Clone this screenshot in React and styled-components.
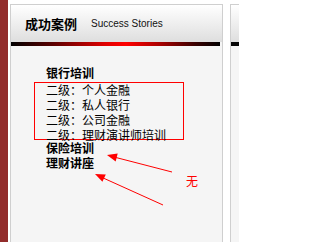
import React from 'react';
import styled, { createGlobalStyle } from 'styled-components';

const Global = createGlobalStyle`
html, body {
    margin: 0;
    padding: 0;
    background: #fff;
}
body {
    width: 239px;
    height: 242px;
    overflow: hidden;
    font-family: "Liberation Sans", "Noto Sans CJK SC", sans-serif;
}
`

const Page = styled.div`
position: relative;
display: flex;
width: 239px;
height: 242px;
`
const Strip = styled.div`
width: 8px;
flex: none;
background: #922c2b;
margin-right: 2px;
`
const Panel = styled.div`
flex: none;
width: ${p => p.width}px;
margin-top: 4px;
margin-right: ${p => p.gap || 0}px;
border: 1px solid #cfcfcf;
border-bottom: none;
display: flex;
flex-direction: column;
background: #f5f5f5;
`
const Header = styled.div`
height: 37px;
display: flex;
align-items: center;
padding-left: 14px;
background: linear-gradient(to bottom, #ffffff, #dedede);
`
const Title = styled.span`
font-size: 13px;
font-weight: 700;
color: #000;
`
const SubTitle = styled.span`
font-size: 10px;
color: #111;
margin-left: 14px;
`
const Bar = styled.div`
height: 4px;
margin-right: ${p => p.dark ? 0 : 2}px;
background: ${p => p.dark
    ? '#050505'
    : 'linear-gradient(to right, #000 0%, #5a0000 20%, #e00000 45%, #ff0000 55%, #b00000 70%, #3a0000 88%, #000 100%)'};
`
const Body = styled.div`
flex: 1;
padding: 21px 0 0 35px;
`
const Line = styled.div`
font-size: 12px;
line-height: 15px;
height: 15px;
white-space: nowrap;
color: #000;
font-weight: ${p => p.bold ? 700 : 400};
`
const Group = styled.div`
box-sizing: border-box;
width: 150px;
height: 58px;
margin: 0 0 2px -12px;
padding: 1px 0 0 11px;
border: 1px solid #f00;
`
const Note = styled.span`
position: absolute;
left: 186px;
top: 175px;
font-size: 12px;
line-height: 15px;
color: #f00;
`
const Overlay = styled.svg`
position: absolute;
left: 0;
top: 0;
pointer-events: none;
`

const subs = ['二级：个人金融', '二级：私人银行', '二级：公司金融', '二级：理财演讲师培训'];

function App() {
    return (
        <>
            <Global />
            <Page>
                <Strip />
                <Panel width={211} gap={7}>
                    <Header>
                        <Title>成功案例</Title>
                        <SubTitle>Success Stories</SubTitle>
                    </Header>
                    <Bar />
                    <Body>
                        <Line bold>银行培训</Line>
                        <Group>
                            {subs.map(s => <Line key={s}>{s}</Line>)}
                        </Group>
                        <Line bold>保险培训</Line>
                        <Line bold>理财讲座</Line>
                    </Body>
                </Panel>
                <Panel width={20}>
                    <Header />
                    <Bar dark />
                </Panel>
                <Overlay width="239" height="242" viewBox="0 0 239 242">
                    <line x1="172" y1="172" x2="114" y2="157" stroke="#f00" strokeWidth="1" />
                    <polygon points="107,155 115.7,161.4 117.7,153.6" fill="#f00" />
                    <line x1="163" y1="205" x2="101" y2="177" stroke="#f00" strokeWidth="1" />
                    <polygon points="95,174 102.4,181.8 105.8,174.5" fill="#f00" />
                </Overlay>
                <Note>无</Note>
            </Page>
        </>
    );
}

export default App;
